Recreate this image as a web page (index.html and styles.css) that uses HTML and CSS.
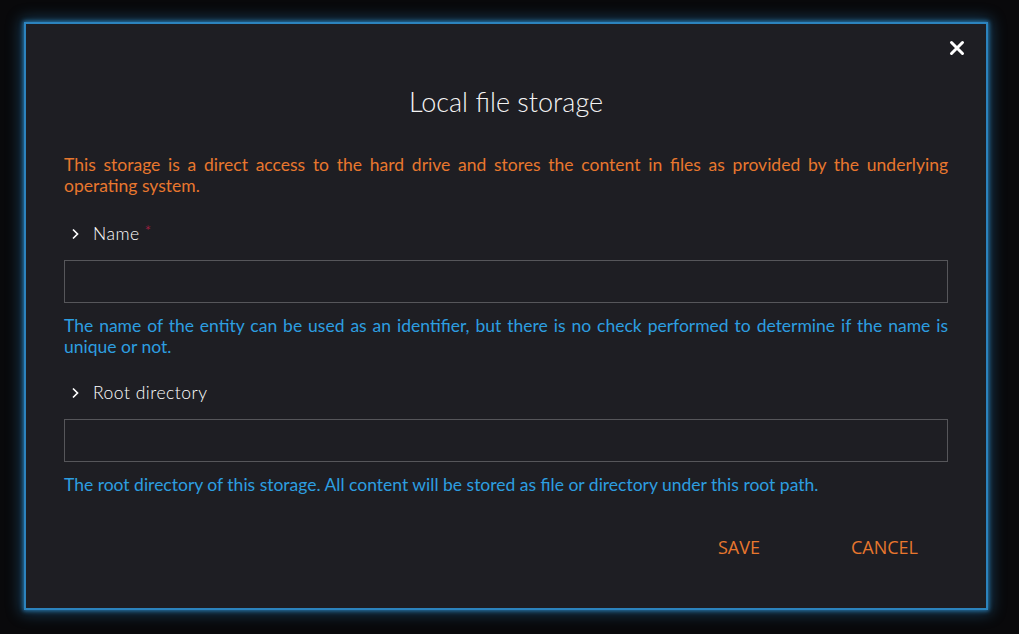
FILE: index.html
```html
<!DOCTYPE html>
<html lang="en">
<head>
    <meta charset="UTF-8">
    <meta name="viewport" content="width=device-width, initial-scale=1.0">
    <title>Local file storage</title>
    <link rel="stylesheet" href="styles.css">
</head>
<body>
    <div id="dialog">
        <button id="close" aria-label="close">
            <svg width="16" height="16" viewBox="0 0 16 16">
                <path d="M2.5 2.5 L13.5 13.5 M13.5 2.5 L2.5 13.5" stroke="#fff" stroke-width="3" stroke-linecap="round"/>
            </svg>
        </button>
        <h1>Local file storage</h1>
        <p class="desc">This storage is a direct access to the hard drive and stores the content in files as provided by the underlying operating system.</p>
        <div class="field">
            <label>
                <svg class="chev" width="10" height="12" viewBox="0 0 10 12">
                    <path d="M3 1.5 L7.5 6 L3 10.5" fill="none" stroke="#fff" stroke-width="1.7"/>
                </svg>
                Name <span class="req">*</span>
            </label>
            <input type="text">
            <p class="help">The name of the entity can be used as an identifier, but there is no check performed to determine if the name is unique or not.</p>
        </div>
        <div class="field">
            <label>
                <svg class="chev" width="10" height="12" viewBox="0 0 10 12">
                    <path d="M3 1.5 L7.5 6 L3 10.5" fill="none" stroke="#fff" stroke-width="1.7"/>
                </svg>
                Root directory
            </label>
            <input type="text">
            <p class="help">The root directory of this storage. All content will be stored as file or directory under this root path.</p>
        </div>
        <div id="actions">
            <button class="act">SAVE</button>
            <button class="act">CANCEL</button>
        </div>
    </div>
</body>
</html>
```
FILE: styles.css
```css
body{
    margin: 0;
    width: 1019px;
    height: 634px;
    box-sizing: border-box;
    padding: 22px 31px 24px 24px;
    background-color: #09090b;
    font-family: "Lato", "Open Sans", sans-serif;
    overflow: hidden;
}
#dialog{
    position: relative;
    width: 964px;
    height: 588px;
    box-sizing: border-box;
    border: 2px solid #2c83bd;
    background-color: #1e1e23;
    box-shadow: 0 0 4px 1px rgba(44,131,189,0.8), 0 0 14px 3px rgba(44,131,189,0.45);
    padding: 63px 38px 0 38px;
    color: #fff;
}
#close{
    position: absolute;
    top: 16px;
    right: 21px;
    background: none;
    border: none;
    padding: 0;
    cursor: pointer;
}
h1{
    margin: 0;
    text-align: center;
    font-size: 27px;
    line-height: 30px;
    font-weight: 300;
    color: #f4f4f4;
}
.desc{
    margin: 37px 0 0 0;
    color: #e8772e;
    font-size: 17.5px;
    line-height: 21px;
    text-align: justify;
}
.field{
    margin-top: 27px;
}
.field+.field{
    margin-top: 25px;
}
.field>label{
    display: flex;
    align-items: center;
    font-size: 17.5px;
    font-weight: 300;
    letter-spacing: 0.5px;
    line-height: 21px;
    color: #ffffff;
    padding-left: 6px;
}
.chev{
    margin-right: 13px;
}
.req{
    color: #c8204a;
    margin-left: 5px;
    font-size: 16px;
    line-height: 16px;
    align-self: flex-start;
}
.field>input{
    display: block;
    width: 100%;
    box-sizing: border-box;
    height: 43px;
    margin-top: 16px;
    background: transparent;
    border: 1px solid #56565a;
    color: #fff;
    font-size: 15px;
    padding: 0 10px;
}
.help{
    margin: 12px 0 0 0;
    color: #2d9ee0;
    font-size: 17.5px;
    line-height: 21px;
    text-align: justify;
}
#actions{
    display: flex;
    justify-content: flex-end;
    margin-top: 41px;
    padding-right: 30px;
    gap: 91px;
}
.act{
    background: none;
    border: none;
    padding: 0;
    color: #e8772e;
    font-family: "Open Sans", sans-serif;
    font-size: 18px;
    line-height: 22px;
    cursor: pointer;
}
```
